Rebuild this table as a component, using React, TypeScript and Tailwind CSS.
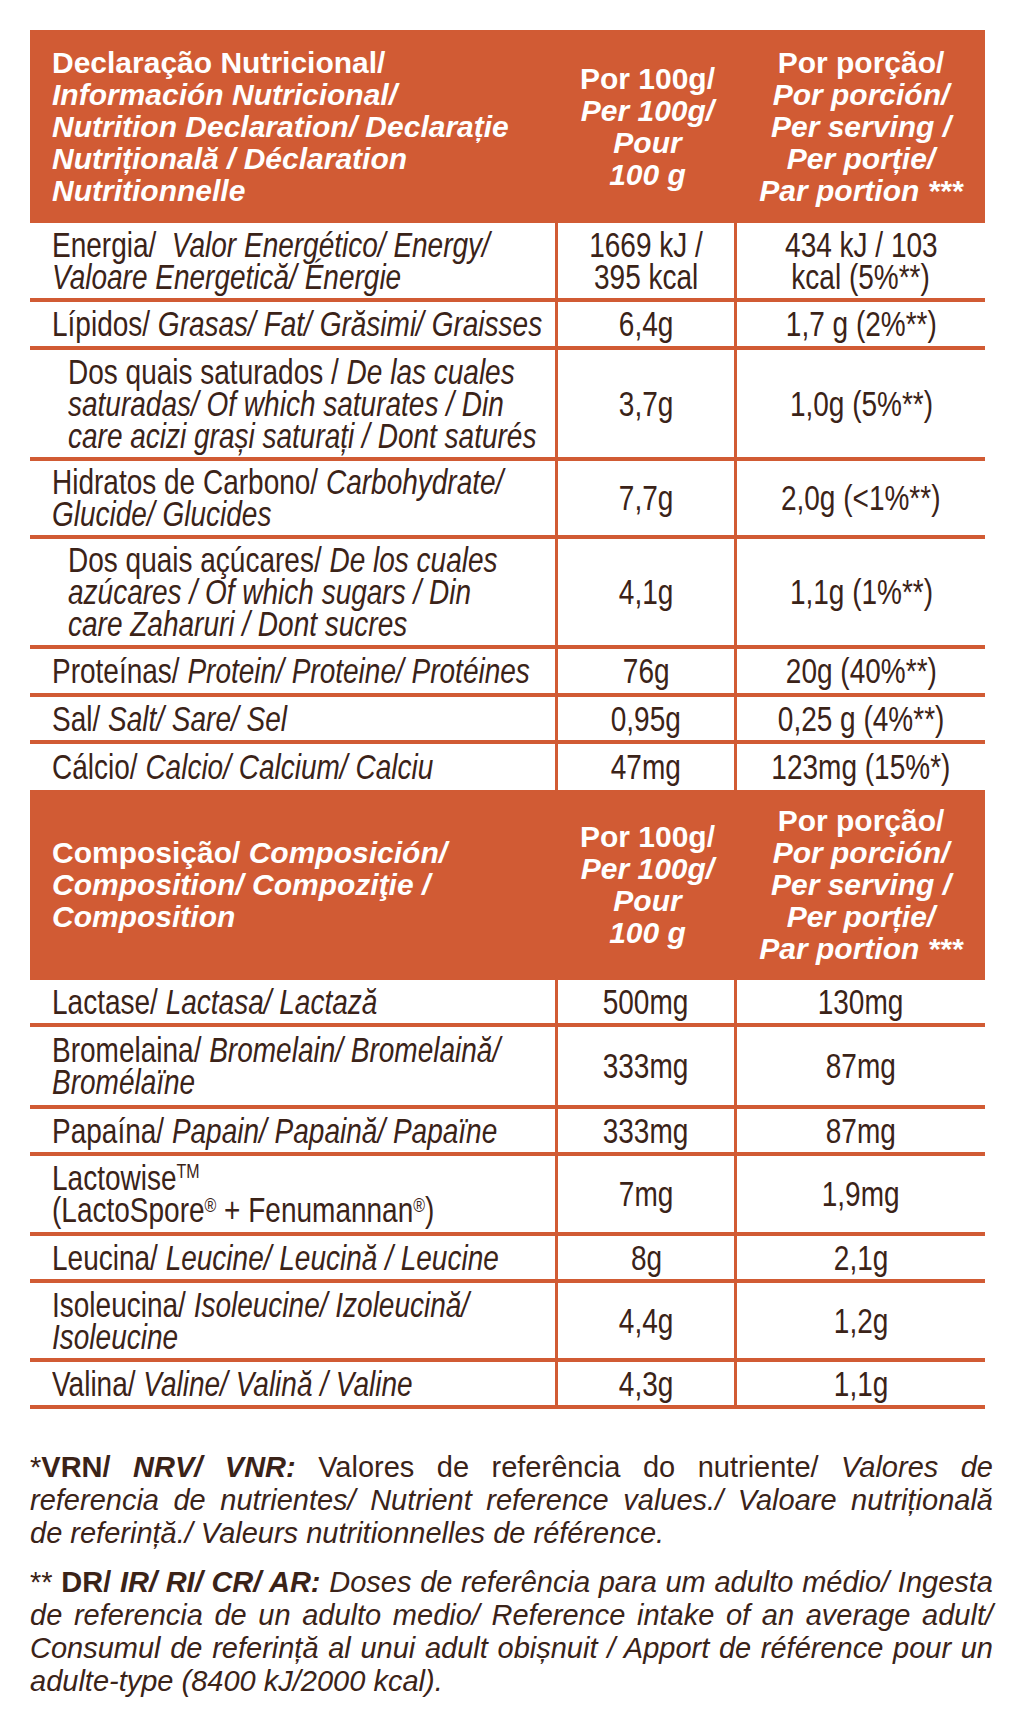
import React from "react";

type Line = React.ReactNode;

const line = "border-[#d15b34]";

function Head({ h, left, mid, right }: { h: string; left: Line[]; mid: Line[]; right: Line[] }) {
  return (
    <div
      className={`grid grid-cols-[528px_179px_248px] bg-[#d15b34] text-white font-bold font-['Liberation_Sans',Arial,sans-serif] text-[30px] leading-[32px] ${h}`}
    >
      <div className="flex flex-col justify-center pl-[22px]">
        {left.map((l, i) => (
          <div key={i} className="whitespace-nowrap">{l}</div>
        ))}
      </div>
      <div className="flex flex-col items-center justify-center text-center">
        {mid.map((l, i) => (
          <div key={i} className="whitespace-nowrap">{l}</div>
        ))}
      </div>
      <div className="flex flex-col items-center justify-center text-center">
        {right.map((l, i) => (
          <div key={i} className="whitespace-nowrap">{l}</div>
        ))}
      </div>
    </div>
  );
}

function Row({
  h,
  label,
  a,
  b,
  indent = false,
  border = true,
}: {
  h: string;
  label: Line[];
  a: Line[];
  b: Line[];
  indent?: boolean;
  border?: boolean;
}) {
  return (
    <div className={`grid grid-cols-[528px_179px_248px] ${h} ${border ? "border-b-4 border-[#d15b34]" : ""}`}>
      <div className={`flex flex-col justify-center border-r-[3px] ${line} ${indent ? "pl-[38px]" : "pl-[22px]"}`}>
        {label.map((l, i) => (
          <div key={i} className="whitespace-nowrap scale-x-[0.8] origin-left">{l}</div>
        ))}
      </div>
      <div className={`flex flex-col items-center justify-center text-center border-r-[3px] ${line}`}>
        {a.map((l, i) => (
          <div key={i} className="whitespace-nowrap scale-x-[0.8]">{l}</div>
        ))}
      </div>
      <div className="flex flex-col items-center justify-center text-center">
        {b.map((l, i) => (
          <div key={i} className="whitespace-nowrap scale-x-[0.8]">{l}</div>
        ))}
      </div>
    </div>
  );
}

const per100 = ["Por 100g/", <i key="a">Per 100g/</i>, <i key="b">Pour</i>, <i key="c">100 g</i>];
const perServing = [
  "Por porção/",
  <i key="a">Por porción/</i>,
  <i key="b">Per serving /</i>,
  <i key="c">Per porție/</i>,
  <i key="d">Par portion ***</i>,
];

export default function App() {
  return (
    <div className="w-[1024px] h-[1734px] bg-white pt-[30px] pl-[30px] text-[#3b2318]">
      <div className="w-[955px] font-['Liberation_Sans',Arial,sans-serif] text-[35px] leading-[32px]">
        {/* Nutrition */}
        <Head
          h="h-[193px]"
          left={[
            "Declaração Nutricional/",
            <i key="1">Información Nutricional/</i>,
            <i key="2">Nutrition Declaration/ Declarație</i>,
            <i key="3">Nutrițională / Déclaration</i>,
            <i key="4">Nutritionnelle</i>,
          ]}
          mid={per100}
          right={perServing}
        />
        <Row
          h="h-[79px]"
          label={[
            <>Energia/&nbsp; <i>Valor Energético/ Energy/</i></>,
            <i>Valoare Energetică/ Énergie</i>,
          ]}
          a={["1669 kJ /", "395 kcal"]}
          b={["434 kJ / 103", "kcal (5%**)"]}
        />
        <Row
          h="h-[48px]"
          label={[<>Lípidos/ <i>Grasas/ Fat/ Grăsimi/ Graisses</i></>]}
          a={["6,4g"]}
          b={["1,7 g (2%**)"]}
        />
        <Row
          h="h-[111px]"
          indent
          label={[
            <>Dos quais saturados / <i>De las cuales</i></>,
            <i>saturadas/ Of which saturates / Din</i>,
            <i>care acizi grași saturați / Dont saturés</i>,
          ]}
          a={["3,7g"]}
          b={["1,0g (5%**)"]}
        />
        <Row
          h="h-[78px]"
          label={[
            <>Hidratos de Carbono/ <i>Carbohydrate/</i></>,
            <i>Glucide/ Glucides</i>,
          ]}
          a={["7,7g"]}
          b={["2,0g (<1%**)"]}
        />
        <Row
          h="h-[110px]"
          indent
          label={[
            <>Dos quais açúcares/ <i>De los cuales</i></>,
            <i>azúcares / Of which sugars / Din</i>,
            <i>care Zaharuri / Dont sucres</i>,
          ]}
          a={["4,1g"]}
          b={["1,1g (1%**)"]}
        />
        <Row
          h="h-[48px]"
          label={[<>Proteínas/ <i>Protein/ Proteine/ Protéines</i></>]}
          a={["76g"]}
          b={["20g (40%**)"]}
        />
        <Row
          h="h-[47px]"
          label={[<>Sal/ <i>Salt/ Sare/ Sel</i></>]}
          a={["0,95g"]}
          b={["0,25 g (4%**)"]}
        />
        <Row
          h="h-[46px]"
          border={false}
          label={[<>Cálcio/ <i>Calcio/ Calcium/ Calciu</i></>]}
          a={["47mg"]}
          b={["123mg (15%*)"]}
        />

        {/* Composition */}
        <Head
          h="h-[190px]"
          left={[
            <>Composição/ <i>Composición/</i></>,
            <i key="1">Composition/ Compoziţie /</i>,
            <i key="2">Composition</i>,
          ]}
          mid={per100}
          right={perServing}
        />
        <Row h="h-[47px]" label={[<>Lactase/ <i>Lactasa/ Lactază</i></>]} a={["500mg"]} b={["130mg"]} />
        <Row
          h="h-[82px]"
          label={[
            <>Bromelaina/ <i>Bromelain/ Bromelaină/</i></>,
            <i>Bromélaïne</i>,
          ]}
          a={["333mg"]}
          b={["87mg"]}
        />
        <Row h="h-[47px]" label={[<>Papaína/ <i>Papain/ Papaină/ Papaïne</i></>]} a={["333mg"]} b={["87mg"]} />
        <Row
          h="h-[80px]"
          label={[
            <>Lactowise<sup className="text-[20px] -top-[12px]">TM</sup></>,
            <>(LactoSpore<sup className="text-[20px]">®</sup> + Fenumannan<sup className="text-[20px]">®</sup>)</>,
          ]}
          a={["7mg"]}
          b={["1,9mg"]}
        />
        <Row h="h-[47px]" label={[<>Leucina/ <i>Leucine/ Leucină / Leucine</i></>]} a={["8g"]} b={["2,1g"]} />
        <Row
          h="h-[79px]"
          label={[
            <>Isoleucina/ <i>Isoleucine/ Izoleucină/</i></>,
            <i>Isoleucine</i>,
          ]}
          a={["4,4g"]}
          b={["1,2g"]}
        />
        <Row h="h-[47px]" label={[<>Valina/ <i>Valine/ Valină / Valine</i></>]} a={["4,3g"]} b={["1,1g"]} />
      </div>

      {/* Footnotes */}
      <div className="mt-[42px] w-[963px] font-['Liberation_Sans',Arial,sans-serif] text-[29px] leading-[33px]">
        <p className="text-justify [text-align-last:justify]">
          *<b>VRN/</b> <b><i>NRV/</i></b> <b><i>VNR:</i></b> Valores de referência do nutriente/ <i>Valores de</i>
        </p>
        <p className="italic text-justify [text-align-last:justify]">
          referencia de nutrientes/ Nutrient reference values./ Valoare nutrițională
        </p>
        <p className="italic">de referință./ Valeurs nutritionnelles de référence.</p>

        <p className="mt-4 text-justify [text-align-last:justify]">
          ** <b>DR/</b> <b><i>IR/ RI/ CR/ AR:</i></b> <i>Doses de referência para um adulto médio/ Ingesta</i>
        </p>
        <p className="italic text-justify [text-align-last:justify]">
          de referencia de un adulto medio/ Reference intake of an average adult/
        </p>
        <p className="italic text-justify [text-align-last:justify]">
          Consumul de referință al unui adult obișnuit / Apport de référence pour un
        </p>
        <p className="italic">adulte-type (8400 kJ/2000 kcal).</p>
      </div>
    </div>
  );
}
